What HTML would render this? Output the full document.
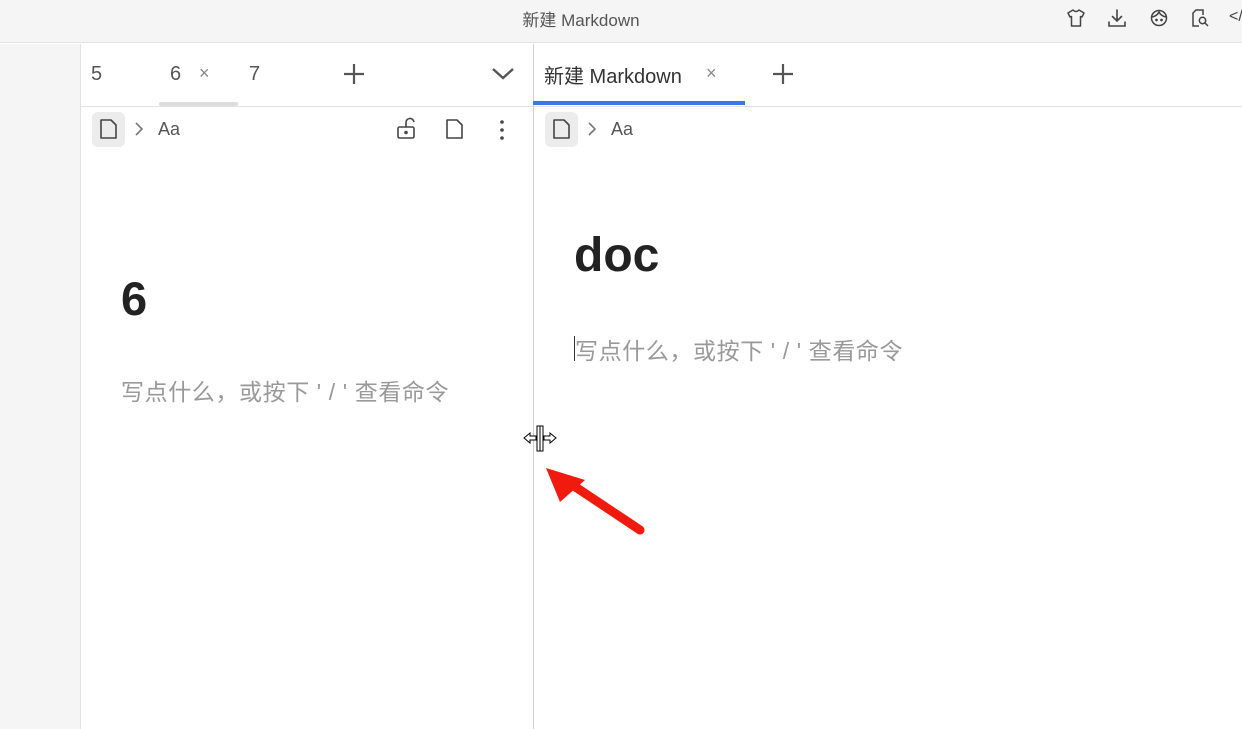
<!DOCTYPE html>
<html><head><meta charset="utf-8"><style>
*{margin:0;padding:0;box-sizing:border-box}
body{width:1242px;height:729px;overflow:hidden;background:#fff;font-family:"Liberation Sans","Noto Sans CJK SC",sans-serif;position:relative;color:#333}
.abs{position:absolute}
svg{position:absolute;overflow:visible}
.ph{font-size:23px;color:#999;letter-spacing:0.6px;white-space:pre}
</style></head><body>
<div class="abs" style="left:0;top:0;width:1242px;height:43px;background:#f5f5f5;border-bottom:1px solid #e2e2e2"></div>
<div class="abs" style="left:0;top:6px;width:1162px;text-align:center;font-size:17px;color:#555">新建 Markdown</div>
<svg style="left:1066px;top:8px" width="20" height="20" viewBox="0 0 20 20" fill="none" stroke="#444" stroke-width="1.5" stroke-linejoin="round"><path d="M7 2 L2 5 L4 9 L5.5 8.5 V18 H14.5 V8.5 L16 9 L18 5 L13 2 Q10 5 7 2Z"/></svg>
<svg style="left:1107px;top:8px" width="20" height="20" viewBox="0 0 20 20" fill="none" stroke="#444" stroke-width="1.6" stroke-linecap="round"><path d="M10 2 V13 M5.5 8.5 L10 13 L14.5 8.5 M2 14 V18 H18 V14"/></svg>
<svg style="left:1149px;top:8px" width="20" height="20" viewBox="0 0 20 20" fill="none" stroke="#444" stroke-width="1.5"><circle cx="10" cy="10" r="7.5"/><path d="M3 9 Q8 8 10 4 Q12 8 17 9"/><circle cx="7.5" cy="12" r=".6" fill="#444"/><circle cx="12.5" cy="12" r=".6" fill="#444"/></svg>
<svg style="left:1190px;top:8px" width="20" height="20" viewBox="0 0 20 20" fill="none" stroke="#444" stroke-width="1.5"><path d="M9 18 H3 V5 L6 2 H13 V7"/><circle cx="12.5" cy="12.5" r="3.2"/><path d="M15 15 L18 18"/></svg>
<div class="abs" style="left:1229px;top:8px;font-size:16px;color:#444">&lt;/</div>
<div class="abs" style="left:0;top:44px;width:81px;height:685px;background:#f5f5f5;border-right:1px solid #e2e2e2"></div>
<div class="abs" style="left:533px;top:44px;width:1px;height:685px;background:#d0d0d0"></div>
<div class="abs" style="left:81px;top:106px;width:452px;height:1px;background:#e2e2e2"></div>
<div class="abs" style="left:91px;top:63px;font-size:20px;color:#555">5</div>
<div class="abs" style="left:170px;top:63px;font-size:20px;color:#555">6</div>
<div class="abs" style="left:199px;top:63px;font-size:18px;color:#888">×</div>
<div class="abs" style="left:249px;top:63px;font-size:20px;color:#555">7</div>
<div class="abs" style="left:159px;top:102px;width:79px;height:4px;border-radius:2px;background:#ddd"></div>
<svg style="left:344px;top:64px" width="20" height="20"><path d="M10 0V20M0 10H20" stroke="#555" stroke-width="2.2"/></svg>
<svg style="left:492px;top:68px" width="22" height="12"><path d="M1 1 L11 10 L21 1" stroke="#555" stroke-width="2.4" fill="none"/></svg>
<div class="abs" style="left:92px;top:112px;width:33px;height:35px;border-radius:6px;background:#ececec"></div>
<svg style="left:100px;top:119px" width="18" height="20" fill="none" stroke="#444" stroke-width="1.6" stroke-linejoin="round"><path d="M1 1 H11 L16 6 V19 H1 Z"/></svg>
<svg style="left:134px;top:122px" width="10" height="14" fill="none" stroke="#777" stroke-width="1.6"><path d="M2 1 L8 7 L2 13"/></svg>
<div class="abs" style="left:158px;top:119px;font-size:18px;color:#555">Aa</div>
<svg style="left:397px;top:118px" width="20" height="22" fill="none" stroke="#444" stroke-width="1.6"><rect x="1" y="9" width="16" height="11" rx="1.5"/><path d="M9 9 V5 A4 4 0 0 1 17 4"/><circle cx="9" cy="14.5" r="1" fill="#444"/></svg>
<svg style="left:446px;top:119px" width="18" height="20" fill="none" stroke="#444" stroke-width="1.6" stroke-linejoin="round"><path d="M1 1 H11 L16 6 V19 H1 Z"/></svg>
<svg style="left:499px;top:119px" width="6" height="22" fill="#444"><circle cx="3" cy="3" r="1.8"/><circle cx="3" cy="11" r="1.8"/><circle cx="3" cy="19" r="1.8"/></svg>
<div class="abs" style="left:121px;top:271px;font-size:47px;font-weight:bold;color:#222">6</div>
<div class="abs ph" style="left:121px;top:373px">写点什么，或按下 ' / ' 查看命令</div>
<div class="abs" style="left:534px;top:106px;width:708px;height:1px;background:#e2e2e2"></div>
<div class="abs" style="left:544px;top:60px;font-size:20px;color:#333">新建 Markdown</div>
<div class="abs" style="left:706px;top:63px;font-size:18px;color:#888">×</div>
<div class="abs" style="left:533px;top:101px;width:212px;height:4px;background:#3b78e7"></div>
<svg style="left:773px;top:64px" width="20" height="20"><path d="M10 0V20M0 10H20" stroke="#555" stroke-width="2.2"/></svg>
<div class="abs" style="left:545px;top:112px;width:33px;height:35px;border-radius:6px;background:#ececec"></div>
<svg style="left:553px;top:119px" width="18" height="20" fill="none" stroke="#444" stroke-width="1.6" stroke-linejoin="round"><path d="M1 1 H11 L16 6 V19 H1 Z"/></svg>
<svg style="left:587px;top:122px" width="10" height="14" fill="none" stroke="#777" stroke-width="1.6"><path d="M2 1 L8 7 L2 13"/></svg>
<div class="abs" style="left:611px;top:119px;font-size:18px;color:#555">Aa</div>
<div class="abs" style="left:574px;top:228px;font-size:48px;font-weight:bold;color:#222">doc</div>
<div class="abs" style="left:574px;top:336px;width:1px;height:25px;background:#333"></div>
<div class="abs ph" style="left:575px;top:332px">写点什么，或按下 ' / ' 查看命令</div>
<svg style="left:523px;top:425px" width="34" height="28" fill="#fff" stroke="#000" stroke-width="1"><path d="M7 8 L1 13 L7 18 V15 H13 V11 H7 Z"/><rect x="14" y="1" width="6" height="25"/><path d="M27 8 L33 13 L27 18 V15 H21 V11 H27 Z"/><path d="M17 1 V26"/></svg>
<svg style="left:540px;top:460px" width="110" height="80"><path d="M100 70 L28 22" stroke="#f01a0e" stroke-width="9" stroke-linecap="round"/><path d="M6 8 L45 20 L20 42 Z" fill="#f01a0e"/></svg>
</body></html>
